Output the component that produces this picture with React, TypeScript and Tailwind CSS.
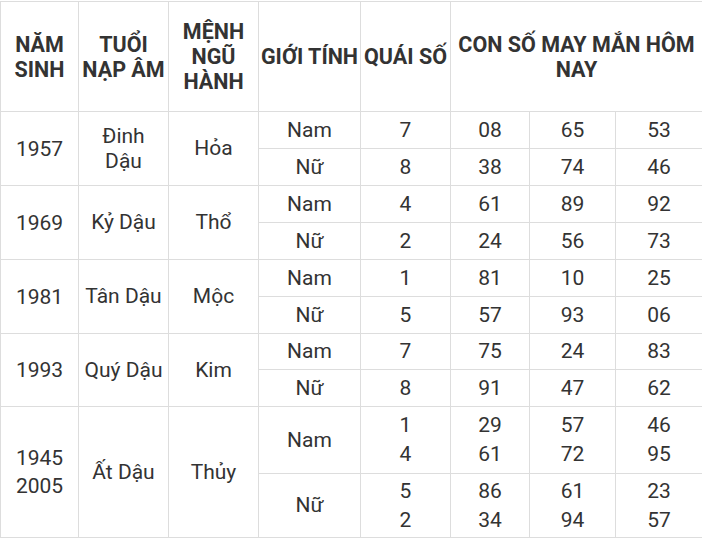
const groups = [
  {
    year: ['1957'],
    tuoi: 'Đinh Dậu',
    menh: 'Hỏa',
    rows: [
      { gt: 'Nam', qs: ['7'], nums: [['08'], ['65'], ['53']] },
      { gt: 'Nữ', qs: ['8'], nums: [['38'], ['74'], ['46']] },
    ],
  },
  {
    year: ['1969'],
    tuoi: 'Kỷ Dậu',
    menh: 'Thổ',
    rows: [
      { gt: 'Nam', qs: ['4'], nums: [['61'], ['89'], ['92']] },
      { gt: 'Nữ', qs: ['2'], nums: [['24'], ['56'], ['73']] },
    ],
  },
  {
    year: ['1981'],
    tuoi: 'Tân Dậu',
    menh: 'Mộc',
    rows: [
      { gt: 'Nam', qs: ['1'], nums: [['81'], ['10'], ['25']] },
      { gt: 'Nữ', qs: ['5'], nums: [['57'], ['93'], ['06']] },
    ],
  },
  {
    year: ['1993'],
    tuoi: 'Quý Dậu',
    menh: 'Kim',
    rows: [
      { gt: 'Nam', qs: ['7'], nums: [['75'], ['24'], ['83']] },
      { gt: 'Nữ', qs: ['8'], nums: [['91'], ['47'], ['62']] },
    ],
  },
  {
    year: ['1945', '2005'],
    tuoi: 'Ất Dậu',
    menh: 'Thủy',
    rows: [
      { gt: 'Nam', qs: ['1', '4'], nums: [['29', '61'], ['57', '72'], ['46', '95']] },
      { gt: 'Nữ', qs: ['5', '2'], nums: [['86', '34'], ['61', '94'], ['23', '57']] },
    ],
  },
];

// row heights per group / sub-row, measured off the screenshot
const heights = [
  ['h-[37px]', 'h-[37px]'],
  ['h-[37px]', 'h-[37px]'],
  ['h-[37px]', 'h-[37px]'],
  ['h-[36px]', 'h-[37px]'],
  ['h-[67px]', 'h-[64px]'],
];

function Lines({ items }: { items: string[] }) {
  return (
    <>
      {items.map((t, i) => (
        <span key={i} className="block">
          {t}
        </span>
      ))}
    </>
  );
}

export default function App() {
  const cell = 'border border-[#dddddd] py-0 text-center align-middle';
  const td = `${cell} px-[4px]`;
  return (
    <div className="bg-white pt-px" style={{ fontFamily: 'Roboto, "Noto Sans", sans-serif' }}>
      <table className="table-fixed border-collapse w-[702px] text-[21px] text-[#333333]">
        <colgroup>
          <col className="w-[78px]" />
          <col className="w-[90px]" />
          <col className="w-[90px]" />
          <col className="w-[102px]" />
          <col className="w-[90px]" />
          <col className="w-[79px]" />
          <col className="w-[86px]" />
          <col className="w-[87px]" />
        </colgroup>
        <thead>
          <tr className="h-[110px] font-bold leading-[25px] text-[21.5px]">
            <th className={`${cell} px-0`}>NĂM SINH</th>
            <th className={`${cell} px-0`}>TUỔI NẠP ÂM</th>
            <th className={`${cell} px-0`}>MỆNH NGŨ HÀNH</th>
            <th className={`${cell} px-0 whitespace-nowrap`}>GIỚI TÍNH</th>
            <th className={`${cell} px-0 whitespace-nowrap`}>QUÁI SỐ</th>
            <th className={`${cell} px-[6px]`} colSpan={3}>
              CON SỐ MAY MẮN HÔM NAY
            </th>
          </tr>
        </thead>
        <tbody>
          {groups.map((g, gi) =>
            g.rows.map((r, ri) => (
              <tr key={`${gi}-${ri}`} className={heights[gi][ri]}>
                {ri === 0 && (
                  <>
                    <td className={`${td} leading-[28px]`} rowSpan={2}>
                      <Lines items={g.year} />
                    </td>
                    <td className={`${td} leading-[25px]`} rowSpan={2}>
                      {g.tuoi}
                    </td>
                    <td className={`${td} leading-[25px]`} rowSpan={2}>
                      {g.menh}
                    </td>
                  </>
                )}
                <td className={`${td} leading-[25px]`}>{r.gt}</td>
                <td className={`${td} leading-[29px]`}>
                  <Lines items={r.qs} />
                </td>
                {r.nums.map((n, ni) => (
                  <td key={ni} className={`${td} leading-[29px]`}>
                    <Lines items={n} />
                  </td>
                ))}
              </tr>
            ))
          )}
        </tbody>
      </table>
    </div>
  );
}
